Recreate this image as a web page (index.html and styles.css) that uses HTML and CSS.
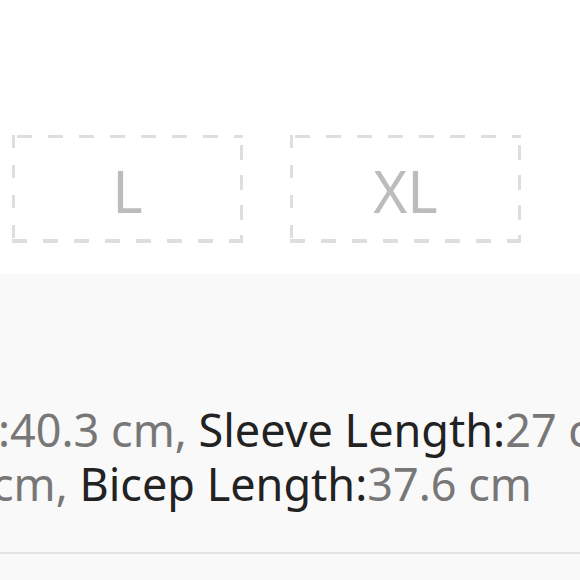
FILE: index.html
```html
<!DOCTYPE html>
<html lang="en">
<head>
<meta charset="utf-8">
<link rel="stylesheet" href="styles.css">
</head>
<body>
<div class="sizes">
  <div class="size">L</div>
  <div class="size">XL</div>
</div>
<section class="details">
  <div class="desc">
    <div class="line line1"><span class="val">:40.3 cm, </span><span class="lab">Sleeve Length:</span><span class="val">27 cm, </span><span class="lab">Cuff:</span></div>
    <div class="line line2"><span class="val">cm, </span><span class="lab">Bicep Length:</span><span class="val">37.6 cm</span></div>
  </div>
  <div class="divider"></div>
</section>
</body>
</html>
```
FILE: styles.css
```css
html, body {
  margin: 0;
  padding: 0;
  background: #ffffff;
  font-family: "Noto Sans", "Liberation Sans", sans-serif;
  overflow: hidden;
  width: 580px;
  height: 580px;
}

.sizes {
  display: flex;
  gap: 47px;
  padding: 135px 0 0 12px;
}

.size {
  width: 231px;
  height: 108px;
  box-sizing: border-box;
  padding-top: 3px;
  display: flex;
  align-items: center;
  justify-content: center;
  color: #bcbcbc;
  font-size: 58px;
  font-weight: 400;
  background:
    repeating-linear-gradient(90deg, #dedede 0 15px, transparent 15px 31px) 5px 0 / 100% 3px no-repeat,
    repeating-linear-gradient(90deg, #dedede 0 15px, transparent 15px 31px) 0 100% / 100% 4px no-repeat,
    repeating-linear-gradient(180deg, #dedede 0 13px, transparent 13px 30px) 0 0 / 3px 100% no-repeat,
    repeating-linear-gradient(180deg, #dedede 0 15px, transparent 15px 30px) 100% 10px / 3px 100% no-repeat;
}

.details {
  margin-top: 31px;
  background: #f9f9f9;
  height: 400px;
  padding-top: 129px;
}

.desc {
  font-size: 45px;
  line-height: 54px;
}

.line {
  white-space: nowrap;
  margin-left: -2px;
}

.line2 {
  margin-left: -8px;
}

.val { color: #777777; }
.lab { color: #222222; }

.divider {
  margin-top: 41px;
  height: 2px;
  background: #e4e4e4;
}
```
